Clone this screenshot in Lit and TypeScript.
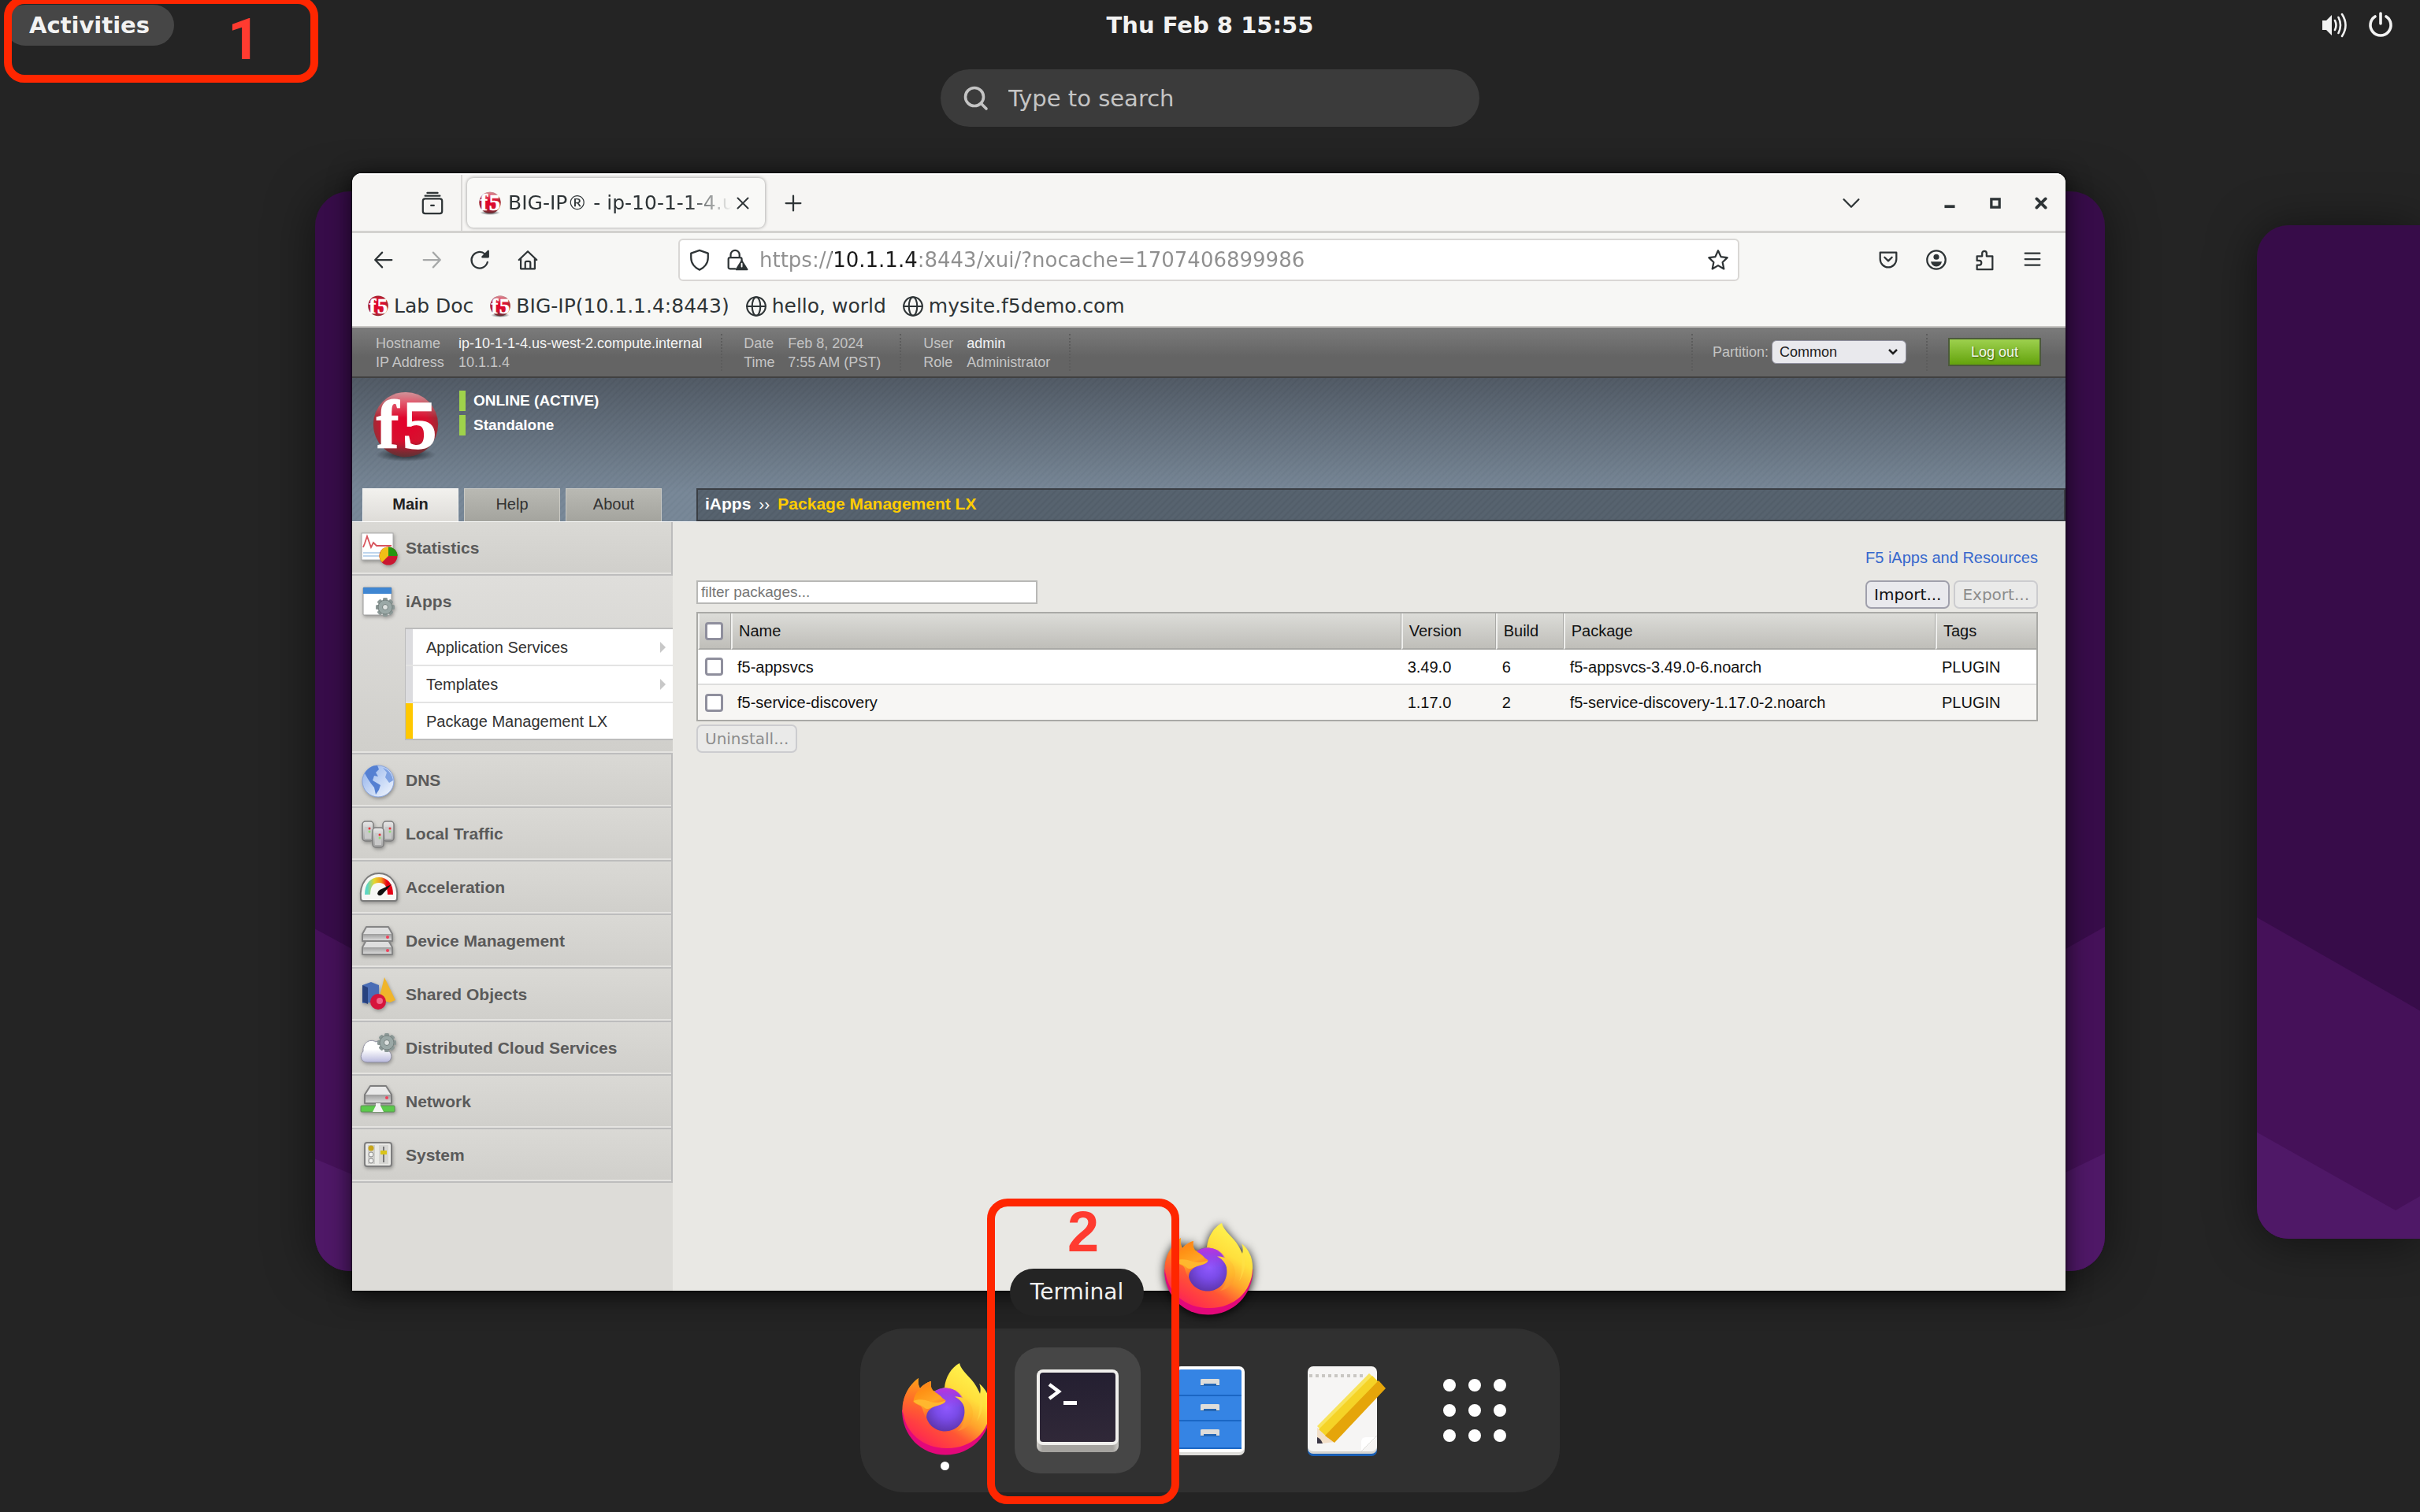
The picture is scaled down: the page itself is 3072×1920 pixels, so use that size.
import { LitElement, html, css, svg, nothing } from "lit";
import { customElement, state } from "lit/decorators.js";
import { classMap } from "lit/directives/class-map.js";

/* ---------- shared drawing helpers ---------- */

const line = (body: unknown, size = 30) => html`
  <svg viewBox="0 0 32 32" width=${size} height=${size} fill="none" stroke="currentColor"
    stroke-width="2.4" stroke-linecap="round" stroke-linejoin="round" aria-hidden="true">${body}</svg>`;

const f5Ball = (size: number, glossy: boolean) => html`
  <svg class="ball" viewBox="0 0 90 94" width=${size} height=${size} aria-hidden="true">
    <defs>
      <radialGradient id="ball" cx="50%" cy="48%" r="55%">
        <stop offset="0" stop-color="#e4002b" />
        <stop offset=".62" stop-color="#d5122f" />
        <stop offset="1" stop-color=${glossy ? "#8c3236" : "#e4002b"} />
      </radialGradient>
      <linearGradient id="gloss" x1="0" y1="0" x2="0" y2="1">
        <stop offset="0" stop-color="#fff" stop-opacity=".5" />
        <stop offset=".4" stop-color="#fff" stop-opacity="0" />
        <stop offset=".75" stop-color="#333" stop-opacity="0" />
        <stop offset="1" stop-color="#333" stop-opacity=".55" />
      </linearGradient>
      <radialGradient id="ground">
        <stop offset="0" stop-color="#10161c" stop-opacity=".9" />
        <stop offset="1" stop-color="#10161c" stop-opacity="0" />
      </radialGradient>
    </defs>
    ${glossy ? svg`<ellipse cx="45" cy="85" rx="40" ry="9" fill="url(#ground)" />` : nothing}
    <circle cx="45" cy="45" r="43" fill="url(#ball)" />
    ${glossy ? svg`<circle cx="45" cy="45" r="43" fill="url(#gloss)" />` : nothing}
    <g font-family="Liberation Serif, serif" font-weight="700" font-size="90" fill="#fff" stroke="#fff" stroke-width="1.500">
      <text x="6" y="76">f</text>
      <text x="41" y="76">5</text>
    </g>
  </svg>`;

const firefoxIcon = html`
  <svg viewBox="0 0 128 128" width="128" height="128" aria-hidden="true">
    <defs>
      <linearGradient id="fx-body" x1="100" y1="14" x2="34" y2="116" gradientUnits="userSpaceOnUse">
        <stop offset="0" stop-color="#fff44f" />
        <stop offset=".25" stop-color="#ffdf3c" />
        <stop offset=".48" stop-color="#ffa22b" />
        <stop offset=".66" stop-color="#ff5634" />
        <stop offset=".85" stop-color="#ff3448" />
        <stop offset="1" stop-color="#f5156c" />
      </linearGradient>
      <radialGradient id="fx-globe" cx="66" cy="60" r="33" gradientUnits="userSpaceOnUse">
        <stop offset="0" stop-color="#9059ff" />
        <stop offset=".45" stop-color="#7a4be8" />
        <stop offset="1" stop-color="#5a33a6" />
      </radialGradient>
      <linearGradient id="fx-top" x1="0" y1="35" x2="0" y2="62" gradientUnits="userSpaceOnUse">
        <stop offset="0" stop-color="#bf35e0" />
        <stop offset="1" stop-color="#a040f0" stop-opacity="0" />
      </linearGradient>
      <linearGradient id="fx-head" x1="26" y1="28" x2="44" y2="68" gradientUnits="userSpaceOnUse">
        <stop offset="0" stop-color="#ff7a22" />
        <stop offset=".35" stop-color="#ff9215" />
        <stop offset=".7" stop-color="#ffa624" />
        <stop offset="1" stop-color="#ff6a2c" />
      </linearGradient>
      <linearGradient id="fx-tail" x1="92" y1="40" x2="88" y2="98" gradientUnits="userSpaceOnUse">
        <stop offset="0" stop-color="#ffdc3e" />
        <stop offset=".5" stop-color="#ffb52c" />
        <stop offset="1" stop-color="#ff7a30" />
      </linearGradient>
      <linearGradient id="fx-left" x1="24" y1="26" x2="18" y2="78" gradientUnits="userSpaceOnUse">
        <stop offset="0" stop-color="#ff9a1a" />
        <stop offset=".5" stop-color="#ff6a2a" />
        <stop offset="1" stop-color="#ff4a3c" stop-opacity="0" />
      </linearGradient>
    </defs>
    <path fill="#e2087a" d="M9 63C9 96 33 120.500 64.500 120.500C97 120.500 121.500 95 121.500 63Z" />
    <path fill="url(#fx-body)" d="M30 23C29 28 30 33 32 36C35 32 41 28 46 27C45 32 46 37 48 40L63 35C64 22 72 9 82 4C84 14 97 22 103 33C105 37 107 40 108 43C109 39 109 34 107 30C117 38 122 50 121 63C120 92 96 113 65 112C36 112 12 92 10 63C9 45 20 30 30 23Z" />
    <path fill="url(#fx-left)" d="M30 23C29 28 30 33 32 36L40 72C30 78 18 78 9 66C9 46 20 30 30 23Z" />
    <path fill="url(#fx-globe)" d="M40 62C40 46 50 35.500 64 35.500C78 36 88 46 88.500 63C89 80 78 90.500 64 90.500C50 90.500 40 80 39.500 69Z" />
    <path fill="url(#fx-top)" d="M44 48C49 39 56 35.500 65 35.500C76 36 84 42 88 52C89 62 60 64 50 60Z" />
    <path fill="url(#fx-head)" d="M32 36C35 32 41 28 46 27C45 32 46 37 50 40C53 42 58 45 60 48C62 50 64 50 64.500 52C62 57 53 57 48 60C42 64 40 67 40 74C35 66 36 60 32 58C28 56 25 55 23.500 53C24 46 28 40 32 36Z" />
    <path fill="#ffb72e" d="M23.500 52C30 49 38 50 45 53C51 55 58 54 64.500 51.500C63 57 54 57 48 60C43 62 40 63 38 61C34 56 27 57 23.500 52Z" />
    <path fill="url(#fx-tail)" d="M76 46.500C86 46 99 52 99 68C99 80 90 88 80 90C87 84 89 76 89 68C89 58 85 51 76 46.500Z" />
    <path fill="#ffe24a" fill-opacity=".5" d="M103 33C108 44 110 62 104 78C112 66 114 50 108 43C107 40 105 37 103 33Z" />
  </svg>`;

const terminalIcon = html`
  <svg viewBox="0 0 128 128" width="128" height="128" aria-hidden="true">
    <defs>
      <linearGradient id="tm-rim" x1="0" x2="1" y1="0" y2="0">
        <stop offset="0" stop-color="#cfcdc9" /><stop offset=".07" stop-color="#a5a39f" />
        <stop offset=".93" stop-color="#a5a39f" /><stop offset="1" stop-color="#cfcdc9" />
      </linearGradient>
      <linearGradient id="tm-screen" x1="0" x2="0" y1="0" y2="1">
        <stop offset="0" stop-color="#241f31" /><stop offset="1" stop-color="#302838" />
      </linearGradient>
    </defs>
    <rect x="12" y="22" width="104" height="95" rx="8" fill="url(#tm-rim)" />
    <rect x="12" y="12" width="104" height="96" rx="8" fill="#f0efec" />
    <rect x="16" y="16" width="96" height="88" rx="4" fill="url(#tm-screen)" />
    <path d="M28 31L40 40L28 49" fill="none" stroke="#fff" stroke-width="4.500" />
    <rect x="46" y="52" width="17" height="5" fill="#fff" />
  </svg>`;

const filesIcon = html`
  <svg viewBox="0 0 128 128" width="128" height="128" aria-hidden="true">
    <rect x="20" y="12" width="88" height="109" rx="7" fill="#deddda" />
    <rect x="20" y="8" width="88" height="109" rx="7" fill="#fff" />
    <rect x="24" y="12" width="80" height="101" rx="3" fill="#3584e4" />
    <path d="M24 45H104M24 77H104M24 112H104" stroke="#1a66c4" stroke-width="2" />
    ${[24, 56, 88].map((y) => svg`
      <rect x="52" y=${y + 2} width="24" height="7" fill="#2466b4" />
      <path d="M52 ${y + 8}V${y + 1}Q52 ${y} 54 ${y}H74Q76 ${y} 76 ${y + 1}V${y + 8}H72V${y + 6}H56V${y + 8}Z" fill="#deddda" />`)}
  </svg>`;

const editorIcon = html`
  <svg viewBox="0 0 128 128" width="128" height="128" aria-hidden="true">
    <rect x="20" y="14" width="88" height="108" rx="7" fill="#1a5fb4" />
    <rect x="20" y="12" width="88" height="107" rx="7" fill="#d5d4d0" />
    <rect x="20" y="8" width="88" height="108" rx="7" fill="#f6f5f4" />
    <path d="M22 20H92" stroke="#c9c7c3" stroke-width="4" stroke-dasharray="4 4" />
    <path d="M88 116V104Q88 98 94 98H108Z" fill="#fff" />
    <path d="M88 116L108 96" stroke="#deddda" stroke-width="1" />
    <path d="M32 86L54 104L38 106L32 106Z" fill="#f2dfc8" />
    <path d="M32 106V98Q37 100 39 106Z" fill="#3d3846" />
    <path d="M32 84L98 17L108 26L42 94Z" fill="#f8e45c" />
    <path d="M34 88L102 20L112 30L46 99Z" fill="#f5d327" />
    <path d="M42 96L110 26L119 36L54 105Z" fill="#e5a50a" />
  </svg>`;

const appsIcon = html`
  <svg viewBox="0 0 128 128" width="128" height="128" fill="#fff" aria-hidden="true">
    ${[32, 64, 96].map((y) => [32, 64, 96].map((x) => svg`<circle cx=${x} cy=${y} r="8" />`))}
  </svg>`;

const gear = (cx: number, cy: number, r: number) => svg`
  <g transform="translate(${cx} ${cy}) scale(${r / 12})">
    ${[0, 45, 90, 135].map((a) => svg`<rect x="-3" y="-12" width="6" height="24" rx="1.500" transform="rotate(${a})" fill="#8b9896" />`)}
    <circle r="9" fill="#9aa8a6" stroke="#75817f" />
    <circle r="3.500" fill="#dfe3e1" stroke="#75817f" />
  </g>`;

const shadowed = (body: unknown) => html`
  <svg class="menu-icon" viewBox="0 0 48 48" width="48" height="48" aria-hidden="true">
    <defs>
      <linearGradient id="metal" x1="0" y1="0" x2="0" y2="1">
        <stop offset="0" stop-color="#e9e9e9" /><stop offset="1" stop-color="#a0a0a0" />
      </linearGradient>
      <linearGradient id="front" x1="0" y1="0" x2="0" y2="1">
        <stop offset="0" stop-color="#9c9c9c" /><stop offset="1" stop-color="#d9d9d9" />
      </linearGradient>
      <linearGradient id="sea" x1="0" y1="0" x2="1" y2="1">
        <stop offset="0" stop-color="#8fb0ea" /><stop offset="1" stop-color="#f4f8ff" />
      </linearGradient>
      <linearGradient id="dial" x1="0" y1="0" x2="1" y2="0">
        <stop offset="0" stop-color="#5fd6c4" /><stop offset=".3" stop-color="#e6d72c" />
        <stop offset=".6" stop-color="#f2961c" /><stop offset=".85" stop-color="#e60014" />
      </linearGradient>
      <linearGradient id="cloud" x1="0" y1="0" x2="0" y2="1">
        <stop offset=".4" stop-color="#fff" /><stop offset="1" stop-color="#b9b9dd" />
      </linearGradient>
    </defs>
    ${body}
  </svg>`;

const server = (y: number) => svg`
  <path d="M8 ${y}H36L41 ${y + 9}V${y + 18}H3V${y + 9}Z" fill="#dedede" stroke="#858585" stroke-width="2" stroke-linejoin="round" />
  <rect x="4" y=${y + 9} width="36" height="8" fill="url(#front)" />
  <circle cx="35" cy=${y + 13} r="2" fill="#f0405a" />`;

const menuIcons: Record<string, unknown> = {
  statistics: shadowed(svg`
    <rect x="2" y="5" width="40" height="34" fill="#fff" stroke="#aaa" />
    <path d="M4 30H40M4 34H40" stroke="#a9c8e8" stroke-width="1.500" />
    <path d="M4 23L6 18L9 9L14 23L17 17L21 21H40" fill="none" stroke="#d8545c" stroke-width="1.800" />
    <circle cx="36" cy="34" r="11.500" fill="#ca1731" />
    <path d="M36 34V22.500A11.500 11.500 0 0 1 47.500 34Z" fill="#25960f" />
    <path d="M36 34V22.500A11.500 11.500 0 0 0 28 42Z" fill="#f1bf16" />`),
  iapps: shadowed(svg`
    <rect x="4" y="6" width="36" height="35" rx="1" fill="#fff" stroke="#9a9a9a" />
    <rect x="4" y="6" width="36" height="8" fill="#3f86d2" />
    ${gear(32, 31, 12)}`),
  dns: shadowed(svg`
    <circle cx="23" cy="25" r="20" fill="url(#sea)" stroke="#88a4dd" />
    <path d="M6 15C10 8 16 5 22 5L24 10L20 14L23 19L18 18L16 24L21 27L26 30L24 36L20 42L18 33L14 28L10 22Z" fill="#5580d2" />
    <path d="M29 8C36 10 41 16 42 24L37 27L32 20L34 14Z" fill="#7fa2e2" />`),
  traffic: shadowed(svg`
    ${[[3, 8], [29, 8], [16, 16]].map(([x, y]) => svg`
      <rect x=${x} y=${y} width="14" height="25" rx="4" fill="url(#metal)" stroke="#7d7d7d" stroke-width="1.500" />
      <rect x=${x + 3} y=${y + 7} width="8" height="15" fill="#c9c9c9" />
      <circle cx=${x + 9} cy=${y + 9} r="1.500" fill="#e8343a" /><circle cx=${x + 9} cy=${y + 13} r="1.500" fill="#8fdc78" />`)}`),
  acceleration: shadowed(svg`
    <path d="M1 38C-1 18 10 6 24 6C38 6 49 18 47 38Q47 41 44 41H4Q1 41 1 38Z" fill="#f7f7f5" stroke="#7b7b7b" stroke-width="2" />
    <path d="M9.500 33C9.500 20 16 14.500 24 14.500C32 14.500 38.500 20 38.500 33" fill="none" stroke="url(#dial)" stroke-width="7" />
    <path d="M40 20L28 33Q24 36 22 32Q22 29 25 27Z" fill="#111" />`),
  device: shadowed(svg`${server(23)}${server(6)}`),
  shared: shadowed(svg`
    <path d="M3 12L14 8L24 12V33L3 35Z" fill="#4a6db5" /><path d="M3 12L10 15V36L3 33Z" fill="#27427f" />
    <path d="M31 2L45 31L38 34L24 30Z" fill="#f0b52b" />
    <circle cx="23" cy="33" r="10" fill="#d6143c" /><circle cx="25" cy="32" r="4" fill="#f0678a" />`),
  cloud: shadowed(svg`
    <path d="M9 42C1 42 -1 33 4 28C3 18 12 11 20 16C28 12 34 20 33 26C42 28 42 41 33 42Z" fill="url(#cloud)" stroke="#8f8fa2" />
    ${gear(34, 17, 12)}`),
  network: shadowed(svg`
    <path d="M13 4H33L40 15V26H6V15Z" fill="#e9e9e9" stroke="#7e7e7e" stroke-width="2" stroke-linejoin="round" />
    <rect x="7" y="15" width="32" height="10" fill="url(#front)" /><circle cx="34" cy="19" r="2" fill="#f0405a" />
    <rect x="1" y="29" width="43" height="8" rx="1" fill="#5cc94c" stroke="#5c8f55" />
    <path d="M20 26H26V29L30 37H16L20 29Z" fill="#f4f4f4" />`),
  system: shadowed(svg`
    <rect x="6" y="8" width="34" height="30" rx="3" fill="#e9e9e6" stroke="#7e7e7e" stroke-width="2" />
    <rect x="10" y="11" width="9" height="24" fill="#cfcfcc" /><rect x="24" y="11" width="12" height="24" fill="#d6d6d3" />
    <circle cx="14" cy="15" r="3.500" fill="#c7a51a" /><circle cx="14" cy="23" r="3" fill="#f2f2f0" stroke="#8d8d8d" />
    <circle cx="14" cy="31" r="3" fill="#f2f2f0" stroke="#8d8d8d" />
    <path d="M30 13V33" stroke="#777" stroke-width="2" /><rect x="26" y="18" width="8" height="5" fill="#d9c419" />`),
};

const wallpaper = (upper: string, lower: string) => html`
  <svg class="wallpaper" viewBox="0 0 100 1000" preserveAspectRatio="none" aria-hidden="true">
    <rect width="100" height="1000" fill="#370c49" />
    <path fill="#451159" d=${upper} />
    <path fill="#4f1867" d=${lower} />
  </svg>`;

/* ---------- F5 configuration page ---------- */

interface MenuEntry { icon: string; label: string; open?: boolean }

@customElement("f5-console")
export class F5Console extends LitElement {
  static styles = css`
    :host { display: flex; flex-direction: column; flex: 1; background: #e9e8e4; color: #222;
      font: 20px/24px "Liberation Sans", Arial, sans-serif; }
    * { box-sizing: border-box; }
    ul, h1 { margin: 0; padding: 0; list-style: none; font: inherit; }
    a { color: inherit; text-decoration: none; }
    .ball { overflow: visible; }
    .info { display: flex; align-items: center; height: 64px; padding: 0 31px 0 30px; font-size: 18px;
      color: #c4c4c4; background: linear-gradient(#7b7b7b, #646464 60%); border-bottom: 2px solid #414141; }
    .facts { display: grid; grid-template-columns: auto auto; padding-right: 24px; margin-right: 27px;
      border-right: 2px dotted #5c5c5c; height: 47px; }
    .facts.host { grid-template-columns: 105px auto; }
    .facts.time { grid-template-columns: 56px auto; margin-right: 28px; }
    .facts.user { grid-template-columns: 55px auto; }
    .facts .strong { color: #f4f4f4; }
    .spacer { flex: 1; }
    .partition { display: flex; align-items: center; gap: 4px; height: 47px; padding: 0 25px;
      border: 2px dotted #5c5c5c; border-width: 0 2px; margin-right: 26px; }
    .select { display: grid; align-items: center; width: 171px; }
    .select > * { grid-area: 1 / 1; }
    .select svg { justify-self: end; margin-right: 8px; color: #222; pointer-events: none; }
    select { appearance: none; height: 30px; width: 100%; padding: 0 9px; border: 1px solid #8f8f9d; border-radius: 6px;
      background: #e9e9ed; font: 18px/24px "Liberation Sans", Arial, sans-serif; color: #222; }
    .logout { width: 118px; height: 36px; padding: 0; border: 2px solid #4c5a3c; color: #f1f7e8;
      font: 18px/24px "Liberation Sans", Arial, sans-serif; text-shadow: 1px 1px 2px #3a5a10;
      background: linear-gradient(#9dd04e, #64a30c); }
    .banner { display: grid; grid-template-columns: 407px 1fr; grid-template-rows: 1fr auto; column-gap: 30px; height: 182px;
      background: repeating-linear-gradient(135deg, rgba(255,255,255,.02) 0 2px, rgba(0,0,0,.02) 4px, rgba(255,255,255,.02) 6px),
        linear-gradient(#4f5863, #768696 80%); }
    .brand { grid-column: 1 / -1; display: flex; gap: 23px; padding: 16px 24px 0 23px; }
    .status { display: grid; gap: 5px; align-content: start; color: #fff; font-weight: 700; font-size: 19px; }
    .status span { border-left: 8px solid #9fd24b; padding-left: 10px; line-height: 26px; }
    .tabs { display: flex; gap: 7px; padding-left: 13px; }
    .tab { flex: 0 0 122px; height: 42px; line-height: 38px; text-align: center; color: #333;
      background: linear-gradient(#b9b9b3, #a4a49e); border: 1px solid #c9c9c4; border-bottom: 0; }
    .tab.on { font-weight: 700; color: #222; background: linear-gradient(#f2f1ee, #dedcd8); border-color: #f4f4f2; }
    .crumbs { display: flex; gap: 10px; height: 42px; line-height: 36px; padding-left: 9px; font-size: 21px; font-weight: 700; color: #fff;
      background: repeating-linear-gradient(135deg, rgba(255,255,255,.02) 0 2px, rgba(0,0,0,.03) 4px, rgba(255,255,255,.02) 6px), #54606c;
      border: 2px solid #3a3e44; }
    .crumbs .sep { font-weight: 400; }
    .crumbs .here { color: #ffcc00; }
    .body { display: grid; grid-template-columns: 407px 1fr; flex: 1; border-top: 1px solid #fff; }
    .side { background: #dddcd8; }
    .entry { height: 68px; border-right: 2px solid #bcbcbc; background: linear-gradient(#dad9d5, #d0cfcb);
      border-bottom: 2px solid #bdbdbd; box-shadow: inset 0 -2px #e4e3e0; }
    .entry a { display: flex; align-items: center; gap: 10px; height: 66px; padding-left: 10px; color: #5a5a5a; }
    .entry > a { font-size: 21px; font-weight: 700; }
    .menu-icon { filter: drop-shadow(1px 2px 2px rgba(0,0,0,.3)); overflow: visible; flex: none; }
    .entry.open { height: auto; border-right: 0; background: linear-gradient(#dfdedb, #d0cfcb); padding-bottom: 16px; }
    .sub { margin-left: 67px; border: 2px solid #bcbcbc; border-width: 2px 0 2px 1px; background: #fff; }
    .entry .sub a { justify-content: space-between; height: 45px; padding: 0 8px 0 17px;
      color: #333; border-left: 9px solid #dcdcdf; }
    .sub li + li { border-top: 2px solid #e3e3e3; }
    .entry .sub .on a { border-left-color: #ffc800; }
    .content { padding: 33px 35px 0 30px; display: flex; flex-direction: column; }
    .resources { align-self: flex-end; color: #3768cd; margin-bottom: 17px; }
    .tools { display: flex; justify-content: space-between; align-items: flex-start; margin-bottom: 4px; }
    .filter { width: 433px; height: 30px; padding: 0 4px; border: 2px solid #b8b8b6; background: #fff;
      font: 19px/24px "Liberation Sans", Arial, sans-serif; }
    .filter::placeholder { color: #777; opacity: 1; }
    .buttons { display: flex; gap: 5px; }
    .push { height: 36px; padding: 0 9px; border: 2px solid #a0a0ac; border-radius: 7px; background: #e9e9ed; color: #111;
      font: 20px/24px "DejaVu Sans", sans-serif; }
    .push:disabled { color: #8c8c8c; border-color: #cccccf; background: #eaeae9; }
    .uninstall { align-self: flex-start; margin-top: 4px; }
    table { width: 100%; border-collapse: separate; border-spacing: 0; border: 2px solid #a9a9a6; background: #fff; table-layout: fixed; }
    th, td { text-align: left; font-weight: 400; padding: 0 0 0 8px; height: 44px; color: #111; }
    th { height: 46px; background: linear-gradient(#dcdcd8, #bfbeb9); border-bottom: 2px solid #a9a9a6;
      border-left: 2px solid #efefed; border-right: 1px solid #a9a9a6; padding-left: 8px; }
    th:last-child { border-right: 0; }
    tbody tr:nth-child(even) { background: #f7f6f4; }
    tbody tr:first-child td { height: 45px; border-bottom: 2px solid #dededd; }
    td:first-child { padding-left: 9px; }
    th:first-child { padding-left: 7px; }
    input[type="checkbox"] { appearance: none; display: block; width: 23px; height: 23px; margin: 0; border: 3px solid #8f8f9d;
      border-radius: 4px; background: #fff; }
    .c-check { width: 42px; } .c-version { width: 120px; } .c-build { width: 86px; } .c-package { width: 27.8%; } .c-tags { width: 128px; }
  `;

  private menu: MenuEntry[] = [
    { icon: "statistics", label: "Statistics" },
    { icon: "iapps", label: "iApps", open: true },
    { icon: "dns", label: "DNS" },
    { icon: "traffic", label: "Local Traffic" },
    { icon: "acceleration", label: "Acceleration" },
    { icon: "device", label: "Device Management" },
    { icon: "shared", label: "Shared Objects" },
    { icon: "cloud", label: "Distributed Cloud Services" },
    { icon: "network", label: "Network" },
    { icon: "system", label: "System" },
  ];

  private submenu = [
    { label: "Application Services", more: true },
    { label: "Templates", more: true },
    { label: "Package Management LX", on: true },
  ];

  private packages = [
    ["f5-appsvcs", "3.49.0", "6", "f5-appsvcs-3.49.0-6.noarch", "PLUGIN"],
    ["f5-service-discovery", "1.17.0", "2", "f5-service-discovery-1.17.0-2.noarch", "PLUGIN"],
  ];

  private renderSubmenu() {
    return html`<ul class="sub">
      ${this.submenu.map((s) => html`
        <li class=${classMap({ on: !!s.on })}>
          <a href="#">${s.label}${s.more
            ? html`<svg width="8" height="14" viewBox="0 0 8 14" aria-hidden="true"><path d="M0 0L7 7L0 14Z" fill="#c8c8c8" /></svg>`
            : nothing}</a>
        </li>`)}
    </ul>`;
  }

  render() {
    return html`
      <header class="info">
        <div class="facts host"><span>Hostname</span><span class="strong">ip-10-1-1-4.us-west-2.compute.internal</span>
          <span>IP Address</span><span>10.1.1.4</span></div>
        <div class="facts time"><span>Date</span><span>Feb 8, 2024</span><span>Time</span><span>7:55 AM (PST)</span></div>
        <div class="facts user"><span>User</span><span class="strong">admin</span><span>Role</span><span>Administrator</span></div>
        <div class="spacer"></div>
        <div class="partition">
          <label for="partition">Partition:</label>
          <div class="select">
            <select id="partition"><option>Common</option></select>
            <svg width="18" height="18" viewBox="0 0 18 18" fill="none" stroke="currentColor" stroke-width="2.500" aria-hidden="true"><path d="M4 6L9 11L14 6" /></svg>
          </div>
        </div>
        <button class="logout">Log out</button>
      </header>
      <div class="banner">
        <div class="brand">${f5Ball(90, true)}
          <div class="status"><span>ONLINE (ACTIVE)</span><span>Standalone</span></div>
        </div>
        <nav class="tabs">
          <a class="tab on" href="#">Main</a><a class="tab" href="#">Help</a><a class="tab" href="#">About</a>
        </nav>
        <div class="crumbs"><span>iApps</span><span class="sep">››</span><h1 class="here">Package Management LX</h1></div>
      </div>
      <div class="body">
        <nav class="side">
          <ul>
            ${this.menu.map((m) => html`
              <li class=${classMap({ entry: true, open: !!m.open })}>
                <a href="#">${menuIcons[m.icon]}<span>${m.label}</span></a>
                ${m.open ? this.renderSubmenu() : nothing}
              </li>`)}
          </ul>
        </nav>
        <main class="content">
          <a class="resources" href="#">F5 iApps and Resources</a>
          <div class="tools">
            <input class="filter" type="text" placeholder="filter packages..." aria-label="filter packages" />
            <div class="buttons"><button class="push">Import...</button><button class="push" disabled>Export...</button></div>
          </div>
          <table>
            <colgroup><col class="c-check" /><col /><col class="c-version" /><col class="c-build" /><col class="c-package" /><col class="c-tags" /></colgroup>
            <thead><tr><th><input type="checkbox" aria-label="Select all" /></th>
              <th>Name</th><th>Version</th><th>Build</th><th>Package</th><th>Tags</th></tr></thead>
            <tbody>
              ${this.packages.map((p) => html`<tr>
                <td><input type="checkbox" aria-label=${p[0]} /></td>${p.map((c) => html`<td>${c}</td>`)}
              </tr>`)}
            </tbody>
          </table>
          <button class="push uninstall" disabled>Uninstall...</button>
        </main>
      </div>`;
  }
}

/* ---------- browser window ---------- */

const globe = line(svg`<circle cx="16" cy="16" r="13.500" /><ellipse cx="16" cy="16" rx="6" ry="13.500" /><path d="M2.500 16H29.500" />`, 28);

@customElement("browser-window")
export class BrowserWindow extends LitElement {
  static styles = css`
    :host { display: flex; flex-direction: column; background: #f7f7f5; border-radius: 12px 12px 0 0; overflow: hidden;
      color: #2e3436; font: 25px/32px "DejaVu Sans", sans-serif; }
    * { box-sizing: border-box; }
    button { display: grid; place-items: center; padding: 0; border: 0; background: none; color: inherit; font: inherit; }
    .ball { overflow: visible; flex: none; }
    .strip { display: flex; align-items: center; height: 76px; background: #f6f5f3; border-bottom: 3px solid #d3d2cf; border-top: 2px solid #fff; }
    .view { width: 140px; height: 71px; padding-left: 66px; border-right: 2px solid #d9d8d6; }
    .tab { display: flex; align-items: center; gap: 8px; width: 378px; height: 63px; margin-left: 6px; padding: 0 14px;
      background: #f9f9f7; border-radius: 8px; box-shadow: 0 0 4px rgba(0,0,0,.4); }
    .title { flex: 1; min-width: 0; margin-right: -8px; overflow: hidden; white-space: nowrap;
      mask-image: linear-gradient(90deg, #000 80%, transparent 100%); }
    .close { flex: none; width: 28px; height: 28px; }
    .new { width: 72px; height: 60px; }
    .fill { flex: 1; }
    .drop { width: 60px; margin-right: 66px; }
    .win { width: 58px; height: 60px; }
    .winset { display: flex; padding-right: 2px; }
    .bar { display: flex; align-items: center; height: 68px; padding: 0 12px 0 9px; }
    .tool { width: 61px; height: 56px; }
    .tool.off { opacity: .4; }
    .url { flex: 1; display: flex; align-items: center; height: 54px; margin: 0 158px 0 161px; padding: 0 10px; gap: 17px;
      background: #fff; border: 2px solid #d9d7d5; border-radius: 6px; }
    .url input { flex: 1; min-width: 0; border: 0; padding: 0; height: 40px; font: 26px/32px "DejaVu Sans", sans-serif;
      color: transparent; background: linear-gradient(90deg, #8f8f8f 0 92px, #1a1a1a 92px 200px, #8f8f8f 200px) text; margin-left: -3px; }
    .marks { display: flex; align-items: center; gap: 20px; height: 52px; padding: 0 19px; border-bottom: 2px solid #c9c7c4; }
    .marks a { display: flex; align-items: center; gap: 6px; color: inherit; text-decoration: none; }
  `;

  render() {
    return html`
      <div class="strip">
        <button class="view" aria-label="Firefox View">${line(svg`<rect x="3" y="10" width="26" height="20" rx="3" /><path d="M6 6H26M9 2H23M14 19H18" />`)}</button>
        <div class="tab" role="tab">
          ${f5Ball(30, true)}<span class="title">BIG-IP® - ip-10-1-1-4.us</span>
          <button class="close" aria-label="Close tab">${line(svg`<path d="M8 8L24 24M24 8L8 24" />`, 26)}</button>
        </div>
        <button class="new" aria-label="New tab">${line(svg`<path d="M16 6V26M6 16H26" />`)}</button>
        <div class="fill"></div>
        <button class="drop" aria-label="List all tabs">${line(svg`<path d="M6 11L16 21L26 11" />`)}</button>
        <div class="winset">
          <button class="win" aria-label="Minimize">${line(svg`<path d="M9 20.500H23" stroke-width="4" stroke-linecap="butt" />`)}</button>
          <button class="win" aria-label="Maximize">${line(svg`<rect x="10.500" y="10.500" width="11" height="11" stroke-width="3.500" stroke-linejoin="miter" />`)}</button>
          <button class="win" aria-label="Close">${line(svg`<path d="M10 10L22 22M22 10L10 22" stroke-width="4" />`)}</button>
        </div>
      </div>
      <div class="bar">
        <button class="tool" aria-label="Back">${line(svg`<path d="M27 16H5M14 6L4.500 16L14 26" />`)}</button>
        <button class="tool off" aria-label="Forward">${line(svg`<path d="M5 16H27M18 6L27.500 16L18 26" />`)}</button>
        <button class="tool" aria-label="Reload">${line(svg`<path d="M26.500 19A11 11 0 1 1 23 8L27 11" /><path d="M27.500 4V12H19.500Z" fill="currentColor" />`)}</button>
        <button class="tool" aria-label="Home">${line(svg`<path d="M4 16L16 4.500L28 16M6.500 14V28H25.500V14M12.500 28V20Q12.500 18 14.500 18H17.500Q19.500 18 19.500 20V28" />`)}</button>
        <div class="url">
          ${line(svg`<path d="M16 3L27.500 7V13C27.500 21 22 27 16 29.500C10 27 4.500 21 4.500 13V7Z" />`)}
          ${line(svg`<path d="M8 13V9A6 6 0 0 1 20 9V13M14 28H7Q5 28 5 26V15Q5 13 7 13H21Q23 13 23 15V17" /><path d="M23 17L30.500 29H15.500Z" fill="currentColor" stroke-width="2" /><path d="M23 21V25" stroke="#fff" stroke-width="2" />`)}
          <input type="text" aria-label="Address" value="https://10.1.1.4:8443/xui/?nocache=1707406899986" />
          ${line(svg`<path d="M16 3.500L19.800 11.800L28.500 13L22 19.200L23.800 28.200L16 23.600L8.200 28.200L10 19.200L3.500 13L12.200 11.800Z" />`)}
        </div>
        <button class="tool" aria-label="Save to Pocket">${line(svg`<path d="M5 6H27V15A11 11 0 0 1 5 15ZM11 12.500L16 17.500L21 12.500" />`)}</button>
        <button class="tool" aria-label="Account">${line(svg`<circle cx="16" cy="16" r="12.500" /><circle cx="16" cy="12" r="3.800" fill="currentColor" stroke="none" /><path d="M8.500 18.500H23.500Q22 25 16 25Q10 25 8.500 18.500Z" fill="currentColor" stroke="none" />`)}</button>
        <button class="tool" aria-label="Extensions">${line(svg`<path d="M6 11H13V7A3 3 0 0 1 19 7V11H27V29H6V23H9A3 3 0 0 0 9 17H6Z" />`)}</button>
        <button class="tool" aria-label="Menu">${line(svg`<path d="M6 7H26M6 15H26M6 23H26" />`)}</button>
      </div>
      <nav class="marks">
        <a href="#">${f5Ball(28, false)}Lab Doc</a>
        <a href="#">${f5Ball(28, true)}BIG-IP(10.1.1.4:8443)</a>
        <a href="#">${globe}hello, world</a>
        <a href="#">${globe}mysite.f5demo.com</a>
      </nav>
      <f5-console></f5-console>`;
  }
}

/* ---------- desktop overview ---------- */

@customElement("app-root")
export class AppRoot extends LitElement {
  @state() private hovered = "Terminal";

  static styles = css`
    :host { display: flex; flex-direction: column; min-height: 100vh; overflow: hidden; background: #242424; color: #f2f2f2;
      font: 29px/36px "DejaVu Sans", sans-serif; box-sizing: border-box; padding-bottom: 25px; position: relative; }
    * { box-sizing: border-box; }
    button { padding: 0; border: 0; background: none; color: inherit; font: inherit; }
    .panel { display: grid; grid-template-columns: 1fr auto 1fr; align-items: center; height: 64px; font-weight: 700; }
    .activities { justify-self: start; }
    .activities button { height: 52px; padding: 0 31px; margin-left: 6px; border-radius: 26px; background: #464646; font-weight: 700; }
    .tray { justify-self: end; display: flex; gap: 25px; padding-right: 33px; }
    .tray svg { display: block; }
    .ring { position: absolute; border: 10px solid #ff2600; border-radius: 26px; pointer-events: none; color: #ff3b30;
      font: 700 72px/72px "Liberation Sans", Arial, sans-serif; text-align: center; z-index: 3; }
    .ring.one { left: 5px; top: -5px; width: 399px; height: 110px; padding: 10px 0 0 274px; text-align: left; font-family: Roboto, sans-serif; }
    .ring.two { left: -35px; top: -189px; width: 244px; height: 388px; line-height: 64px; }
    .search { display: flex; align-items: center; gap: 24px; align-self: center; width: 684px; height: 73px; margin: 24px 0 59px;
      padding: 0 28px; border-radius: 37px; background: #3b3b3b; color: #c4c4c4; }
    .search input { flex: 1; border: 0; background: none; padding: 0; color: inherit; font: inherit; outline: 0; }
    .search input::placeholder { color: #c4c4c4; opacity: 1; }
    .stage { flex: 1; display: grid; grid-template-columns: 400px 1fr 193px 207px; }
    .desk { grid-column: 2; display: grid; position: relative; }
    .desk > .space, .desk > browser-window { grid-area: 1 / 1; }
    .space { position: relative; overflow: hidden; border-radius: 44px; box-shadow: 0 4px 60px rgba(0,0,0,.5); margin: 23px 0 25px; }
    .wallpaper { position: absolute; inset: 0; width: 100%; height: 100%; }
    browser-window { margin: 0 50px 0 47px; box-shadow: 0 4px 30px rgba(0,0,0,.7), 0 0 3px #000; z-index: 1; }
    .space.next { grid-column: 4; margin: 66px 0; border-radius: 40px 0 0 40px; }
    .badge { position: absolute; z-index: 2; left: 50%; bottom: -38px; margin-left: -67px; height: 128px; filter: drop-shadow(0 2px 6px rgba(0,0,0,.9)); }
    .dock { align-self: center; display: flex; gap: 8px; margin-top: 48px; padding: 24px 28px; border-radius: 56px; background: #303030; }
    .slot { position: relative; }
    .app { display: grid; place-items: center; width: 160px; height: 160px; border-radius: 32px; }
    .app.lit { background: #464646; }
    .dot { position: absolute; left: 74px; bottom: 4px; width: 11px; height: 11px; border-radius: 50%; background: #fff; }
    .tip { position: absolute; z-index: 2; left: 50%; top: -100px; width: 170px; margin-left: -86px; height: 60px; border-radius: 30px; background: #242424;
      text-align: center; font-size: 28px; line-height: 60px; }
  `;

  private apps = [
    { name: "Firefox", icon: firefoxIcon, running: true },
    { name: "Terminal", icon: terminalIcon },
    { name: "Files", icon: filesIcon },
    { name: "Text Editor", icon: editorIcon },
    { name: "Show Applications", icon: appsIcon },
  ];

  render() {
    return html`
      <header class="panel">
        <div class="activities"><button>Activities</button></div>
        <div class="clock">Thu Feb 8 15:55</div>
        <div class="tray">
          <svg width="34" height="34" viewBox="0 0 34 34" fill="none" stroke="#f2f2f2" stroke-width="2.600" stroke-linecap="round" role="img" aria-label="Volume">
            <path d="M2 11H7L14 4V30L7 23H2Z" fill="#f2f2f2" stroke="none" />
            <path d="M18 11Q21 17 18 23M22.500 7Q27.500 17 22.500 27M27 3Q36 17 27 31" />
          </svg>
          <svg width="34" height="34" viewBox="0 0 34 34" fill="none" stroke="#f2f2f2" stroke-width="3.600" stroke-linecap="round" role="img" aria-label="Power">
            <path d="M17 2V15M10 6A13 13 0 1 0 24 6" />
          </svg>
        </div>
      </header>
      <div class="ring one">1</div>
      <label class="search">
        <svg width="34" height="34" viewBox="0 0 34 34" fill="none" stroke="#c4c4c4" stroke-width="3.600" stroke-linecap="round" aria-hidden="true">
          <circle cx="15" cy="15" r="11.500" /><path d="M23.500 23.500L30 30" />
        </svg>
        <input type="text" placeholder="Type to search" aria-label="Search" />
      </label>
      <section class="stage">
        <div class="desk">
          <div class="space">${wallpaper(
            "M0 683L5 728L50 1000L95 728L100 681V1000H0Z",
            "M0 896L5 931L50 1000L95 931L100 891V1000H0Z")}</div>
          <browser-window></browser-window>
          <div class="badge">${firefoxIcon}</div>
        </div>
        <div class="space next">${wallpaper(
          "M0 683L100 775V1000H0Z",
          "M0 895L85 972L100 958V1000H0Z")}</div>
      </section>
      <nav class="dock">
        ${this.apps.map((a) => html`
          <div class="slot">
            <button class=${classMap({ app: true, lit: a.name === this.hovered })} aria-label=${a.name}
              @mouseenter=${() => (this.hovered = a.name)}>${a.icon}</button>
            ${a.running ? html`<span class="dot"></span>` : nothing}
            ${a.name === "Terminal" ? html`<span class="tip">Terminal</span><div class="ring two">2</div>` : nothing}
          </div>`)}
      </nav>`;
  }
}
